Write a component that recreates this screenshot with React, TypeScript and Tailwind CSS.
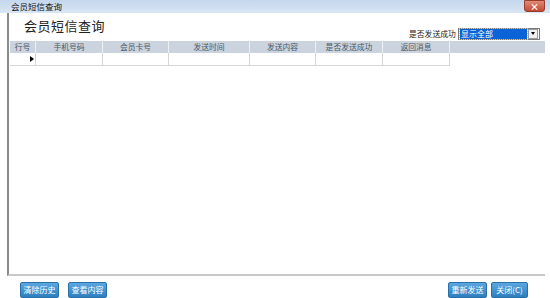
import { useState } from 'react';

const columns = [
  { label: '行号', w: 'w-[26px]' },
  { label: '手机号码', w: 'w-[67px]' },
  { label: '会员卡号', w: 'w-[66px]' },
  { label: '发送时间', w: 'w-[81px]' },
  { label: '发送内容', w: 'w-[66px]' },
  { label: '是否发送成功', w: 'w-[67px]' },
  { label: '返回消息', w: 'w-[67px]' },
];

function Btn({ label, w = 'w-[39px]' }: { label: string; w?: string }) {
  return (
    <button className={`${w} h-[16px] px-0 rounded-[2px] border border-[#2a6fa8] bg-gradient-to-b from-[#5aa7e0] to-[#2d7fc0] text-white text-[8px] leading-[14px] whitespace-nowrap`}>
      {label}
    </button>
  );
}

export default function App() {
  const [filter] = useState('显示全部');

  return (
    <div
      className="w-[550px] h-[298px] bg-white flex flex-col overflow-hidden text-[#222]"
      style={{ fontFamily: '"Noto Sans CJK SC", "Noto Sans", sans-serif' }}
    >
      {/* 标题栏 */}
      <div className="h-[13px] flex items-start justify-between bg-gradient-to-b from-[#c4d7ed] to-[#d9e6f4]">
        <span className="pl-[11px] text-[8.5px] leading-[12px] text-[#111]">会员短信查询</span>
        <div className="mr-[5px] w-[21px] h-[12px] rounded-b-[3px] border border-[#9a3b2c] bg-gradient-to-b from-[#e08a78] to-[#c24a33] flex items-center justify-center text-white text-[9px] leading-none font-bold">
          ×
        </div>
      </div>

      {/* 主体 */}
      <div className="ml-[7px] mr-[5px] h-[268px] border-l-2 border-b-2 border-l-[#8c8c8c] border-b-[#c8c8c8] flex flex-col">
        <div className="h-[28px] flex items-end justify-between pl-[15px]">
          <div className="text-[13px] leading-[13px] mb-[9px] tracking-[0.5px]">会员短信查询</div>
          <div className="flex items-center mb-[1px] mr-[5px]">
            <span className="w-[49px] text-[7.8px] whitespace-nowrap">是否发送成功</span>
            <div className="w-[82px] h-[12px] border border-[#7a7a7a] flex items-center bg-white">
              <div className="flex-1 h-[10px] ml-[1px] bg-[#0a64d8] text-white text-[8px] leading-[10px] pl-[1px] outline outline-1 outline-dotted outline-[#e8c070]">
                {filter}
              </div>
              <div className="w-[10px] h-[10px] mx-[1px] border border-[#9a9a9a] bg-[#f0f0f0] flex items-center justify-center">
                <div className="w-0 h-0 border-l-[2.5px] border-r-[2.5px] border-t-[3px] border-l-transparent border-r-transparent border-t-black" />
              </div>
            </div>
          </div>
        </div>

        {/* 表格 */}
        <div className="pl-[1px]">
          <div className="flex h-[12px] bg-[#cbd3de]">
            {columns.map((c) => (
              <div
                key={c.label}
                className={`${c.w} border-r border-[#eef1f4] text-center text-[7.8px] leading-[12px] text-[#4a5866]`}
              >
                {c.label}
              </div>
            ))}
          </div>
          <div className="flex h-[13px]">
            {columns.map((c, i) => (
              <div
                key={c.label}
                className={`${c.w} border-r border-b border-[#d6d6d6] flex items-center justify-end`}
              >
                {i === 0 && (
                  <div className="mr-[1px] w-0 h-0 border-t-[3.5px] border-b-[3.5px] border-l-[4px] border-t-transparent border-b-transparent border-l-black" />
                )}
              </div>
            ))}
          </div>
        </div>
      </div>

      {/* 按钮 */}
      <div className="flex items-start pt-[6px] pl-[20px] pr-[22px]">
        <div className="flex gap-[9px]">
          <Btn label="清除历史" />
          <Btn label="查看内容" />
        </div>
        <div className="ml-auto flex gap-[4px]">
          <Btn label="重新发送" />
          <Btn label="关闭(C)" w="w-[37px]" />
        </div>
      </div>
    </div>
  );
}
